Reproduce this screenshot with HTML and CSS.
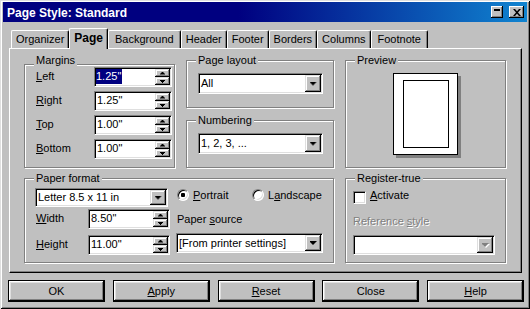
FILE: index.html
```html
<!DOCTYPE html>
<html lang="en">
<head>
<meta charset="utf-8">
<title>Page Style: Standard</title>
<link rel="stylesheet" href="styles.css">
</head>
<body>
<div class="window">
	<div class="titlebar">
		<span class="title">Page Style: Standard</span>
		<span class="tbtn tbtn-min"></span>
		<span class="tbtn tbtn-close"><svg width="8" height="7" viewBox="0 0 8 7"><path d="M0 0h2l2 2.3L6 0h2L5 3.5 8 7H6L4 4.7 2 7H0l3-3.5z"/></svg></span>
	</div>

	<div class="tabs">
		<div class="tab">Organizer</div>
		<div class="tab active">Page</div>
		<div class="tab wide">Background</div>
		<div class="tab">Header</div>
		<div class="tab">Footer</div>
		<div class="tab">Borders</div>
		<div class="tab">Columns</div>
		<div class="tab wide">Footnote</div>
	</div>

	<div class="panel">
		<div class="group margins">
			<span class="caption">Margins</span>
			<div class="row">
				<label><u>L</u>eft</label>
				<div class="spinbox"><span class="value"><span class="sel">1.25"</span></span><span class="spin"><i class="up"></i><i class="down"></i></span></div>
			</div>
			<div class="row">
				<label><u>R</u>ight</label>
				<div class="spinbox"><span class="value">1.25"</span><span class="spin"><i class="up"></i><i class="down"></i></span></div>
			</div>
			<div class="row">
				<label><u>T</u>op</label>
				<div class="spinbox"><span class="value">1.00"</span><span class="spin"><i class="up"></i><i class="down"></i></span></div>
			</div>
			<div class="row">
				<label><u>B</u>ottom</label>
				<div class="spinbox"><span class="value">1.00"</span><span class="spin"><i class="up"></i><i class="down"></i></span></div>
			</div>
		</div>

		<div class="stack">
			<div class="group single">
				<span class="caption">Page layout</span>
				<div class="combo"><span class="value">All</span><span class="drop"></span></div>
			</div>
			<div class="group single">
				<span class="caption">Numbering</span>
				<div class="combo"><span class="value">1, 2, 3, ...</span><span class="drop"></span></div>
			</div>
		</div>

		<div class="group preview">
			<span class="caption">Preview</span>
			<div class="page"><div class="page-body"></div></div>
		</div>

		<div class="group paper">
			<span class="caption">Paper format</span>
			<div class="paper-left">
				<div class="combo format"><span class="value">Letter 8.5 x 11 in</span><span class="drop"></span></div>
				<div class="row dim">
					<label><u>W</u>idth</label>
					<div class="spinbox"><span class="value">8.50"</span><span class="spin"><i class="up"></i><i class="down"></i></span></div>
				</div>
				<div class="row dim dim-last">
					<label><u>H</u>eight</label>
					<div class="spinbox"><span class="value">11.00"</span><span class="spin"><i class="up"></i><i class="down"></i></span></div>
				</div>
			</div>
			<div class="paper-right">
				<div class="options">
					<span class="option"><span class="radio on"></span><span><u>P</u>ortrait</span></span>
					<span class="option"><span class="radio"></span><span>L<u>a</u>ndscape</span></span>
				</div>
				<div class="label-line">Paper <u>s</u>ource</div>
				<div class="combo source"><span class="value">[From printer settings]</span><span class="drop"></span></div>
			</div>
		</div>

		<div class="group register">
			<span class="caption">Register-true</span>
			<div class="check-row"><span class="checkbox"></span><span class="check-label"><u>A</u>ctivate</span></div>
			<div class="label-line disabled">Reference <u>s</u>tyle</div>
			<div class="combo refstyle off"><span class="value"></span><span class="drop"></span></div>
		</div>
	</div>

	<div class="buttons">
		<div class="btn">OK</div>
		<div class="btn"><u>A</u>pply</div>
		<div class="btn"><u>R</u>eset</div>
		<div class="btn">Close</div>
		<div class="btn"><u>H</u>elp</div>
	</div>
</div>
</body>
</html>
```

FILE: styles.css
```css
body {
	margin: 0;
	background: #c0c0c0;
	color: #000;
	font-family: "Liberation Sans", Arial, sans-serif;
	font-size: 11px;
	line-height: 13px;
}

u {
	text-decoration-thickness: 1px;
	text-underline-offset: 1px;
}

.window {
	width: 530px;
	height: 309px;
	box-sizing: border-box;
	padding: 2px 3px 3px 3px;
	background: #c0c0c0;
	box-shadow: inset 1px 1px #dfdfdf, inset -1px -1px #000, inset 2px 2px #fff, inset -2px -2px #808080;
}

/* title bar */

.titlebar {
	display: flex;
	align-items: center;
	height: 20px;
	padding: 0 3px 0 4px;
	background: linear-gradient(90deg, #000080 45%, #1084d0);
	color: #fff;
}

.title {
	flex: 1;
	padding-top: 3px;
	font-size: 12px;
	font-weight: bold;
}

.tbtn {
	display: flex;
	align-items: center;
	justify-content: center;
	width: 12px;
	height: 12px;
	background: #c0c0c0;
	box-shadow: inset -1px -1px #000, inset 1px 1px #fff, inset -2px -2px #808080;
}

.tbtn-min {
	align-items: flex-start;
	justify-content: flex-start;
}

.tbtn-min::after {
	content: "";
	width: 6px;
	height: 2px;
	margin: 3px 0 0 3px;
	background: #000;
}

.tbtn-close {
	width: 15px;
	margin-left: 6px;
}

/* tabs */

.tabs {
	display: flex;
	align-items: flex-end;
	height: 20px;
	margin-top: 6px;
	padding-left: 8px;
}

.tab {
	height: 18px;
	box-sizing: border-box;
	padding: 2px 4px 0;
	border: 1px solid #fff;
	border-right-color: #000;
	border-bottom: 0;
	border-radius: 2px 2px 0 0;
	box-shadow: inset -1px 0 #808080;
}

.tab.wide {
	padding: 2px 6px 0;
}

.tab.active {
	position: relative;
	z-index: 1;
	height: 21px;
	margin-bottom: -1px;
	padding-top: 3px;
	background: #c0c0c0;
	font-size: 12px;
	font-weight: bold;
}

/* page panel */

.panel {
	display: grid;
	grid-template-columns: 151px 148px 161px;
	grid-template-rows: 108px 85px;
	column-gap: 11px;
	row-gap: 10px;
	height: 225px;
	box-sizing: border-box;
	margin: 0 5px 0 6px;
	padding: 11px 0 0 14px;
	border: 1px solid;
	border-color: #fff #000 #000 #fff;
	box-shadow: inset -1px -1px #808080;
}

.group {
	position: relative;
	border: 1px solid #808080;
	box-shadow: inset 1px 1px #fff, 1px 1px #fff;
}

.caption {
	position: absolute;
	top: -7px;
	left: 9px;
	padding: 0 2px;
	background: #c0c0c0;
}

.row {
	display: flex;
	align-items: center;
}

.row label {
	padding-bottom: 2px;
}

.margins {
	display: flex;
	flex-direction: column;
	gap: 4px;
	margin-top: 4px;
	padding: 2px 2px 0 11px;
}

.margins .caption {
	top: -11px;
}

.margins label {
	width: 58px;
}

/* sunken fields */

.spinbox, .combo {
	display: flex;
	box-sizing: border-box;
	padding: 1px;
	background: #fff;
	border: 1px solid;
	border-color: #808080 #fff #fff #808080;
	box-shadow: inset 1px 1px #000, inset -1px -1px #dfdfdf;
}

.spinbox {
	width: 78px;
	height: 20px;
}

.spinbox .value {
	flex: 1;
	padding-left: 1px;
	line-height: 14px;
}

.sel {
	display: inline-block;
	padding: 0 1px 1px 0;
	margin-left: -1px;
	background: #000080;
	color: #fff;
}

.spin {
	display: flex;
	flex-direction: column;
	width: 15px;
}

.spin i, .drop {
	display: grid;
	place-items: center;
	background: #c0c0c0;
	box-shadow: inset -1px -1px #000, inset 1px 1px #dfdfdf, inset -2px -2px #808080, inset 2px 2px #fff;
}

.spin i {
	flex: 1;
}

.spin i::after {
	content: "";
	width: 5px;
	height: 3px;
	background: #000;
	clip-path: polygon(2px 0, 3px 0, 3px 1px, 4px 1px, 4px 2px, 5px 2px, 5px 3px, 0 3px, 0 2px, 1px 2px, 1px 1px, 2px 1px);
}

.spin i.down::after {
	transform: scaleY(-1);
}

.combo {
	height: 21px;
}

.combo .value {
	flex: 1;
	align-self: center;
	padding-left: 1px;
	white-space: nowrap;
}

.drop {
	width: 16px;
}

.drop::before, .drop::after {
	content: "";
	grid-area: 1 / 1;
	width: 7px;
	height: 4px;
	clip-path: polygon(0 0, 7px 0, 7px 1px, 6px 1px, 6px 2px, 5px 2px, 5px 3px, 4px 3px, 4px 4px, 3px 4px, 3px 3px, 2px 3px, 2px 2px, 1px 2px, 1px 1px, 0 1px);
}

.drop::after {
	background: #000;
}

.off .drop::before {
	background: #fff;
	transform: translate(1px, 1px);
}

.off .drop::after {
	background: #808080;
}

/* middle column */

.stack {
	display: flex;
	flex-direction: column;
	gap: 12px;
}

.single {
	flex: 1;
	padding: 12px 0 0 11px;
}

.single .combo {
	width: 125px;
}

/* preview */

.preview {
	display: flex;
	align-items: center;
	justify-content: center;
}

.page {
	width: 65px;
	height: 82px;
	box-sizing: border-box;
	padding: 6px 8px 6px 9px;
	background: #fff;
	border: 1px solid #000;
	box-shadow: 3px 3px 0 #808080;
}

.page-body {
	height: 100%;
	box-sizing: border-box;
	border: 1px solid #000;
}

/* paper format */

.paper {
	grid-column: 1 / 3;
	display: flex;
	padding: 9px 0 0 10px;
}

.paper-left {
	display: flex;
	flex-direction: column;
	width: 135px;
}

.combo.format {
	width: 133px;
	height: 19px;
}

.dim {
	margin-top: 2px;
}

.dim-last {
	margin-top: 6px;
}

.dim label {
	width: 52px;
	padding-left: 1px;
}

.dim .spinbox {
	width: 82px;
}

.paper-right {
	display: flex;
	flex-direction: column;
	width: 147px;
	margin-left: 6px;
}

.options {
	display: flex;
	align-items: center;
	height: 14px;
	padding-left: 1px;
}

.option {
	display: flex;
	align-items: center;
	gap: 4px;
}

.option:first-child {
	width: 75px;
}

.radio {
	display: grid;
	place-items: center;
	width: 12px;
	height: 12px;
	box-sizing: border-box;
	background: #fff;
	border: 1px solid;
	border-color: #808080 #fff #fff #808080;
	border-radius: 50%;
	box-shadow: inset 1px 1px #000, inset -1px -1px #dfdfdf;
}

.radio.on::after {
	content: "";
	width: 4px;
	height: 4px;
	border-radius: 1px;
	background: #000;
}

.label-line {
	margin-top: 11px;
	padding-left: 1px;
}

.combo.source {
	width: 147px;
	height: 20px;
	margin-top: 7px;
}

/* register-true */

.register {
	display: flex;
	flex-direction: column;
	padding: 12px 0 0 7px;
}

.check-row {
	display: flex;
	align-items: flex-start;
	gap: 4px;
}

.checkbox {
	width: 13px;
	height: 13px;
	box-sizing: border-box;
	background: #fff;
	border: 1px solid;
	border-color: #808080 #fff #fff #808080;
	box-shadow: inset 1px 1px #000, inset -1px -1px #dfdfdf;
}

.check-label {
	margin-top: -2px;
}

.register .label-line {
	padding-left: 0;
}

.disabled {
	color: #808080;
	text-shadow: 1px 1px 0 #fff;
}

.combo.refstyle {
	width: 142px;
	height: 20px;
	margin-top: 7px;
}

/* dialog buttons */

.buttons {
	display: flex;
	justify-content: space-between;
	margin: 7px 3px 0 5px;
}

.btn {
	display: flex;
	align-items: center;
	justify-content: center;
	width: 97px;
	height: 22px;
	box-sizing: border-box;
	border: 1px solid #000;
	box-shadow: inset -1px -1px #000, inset 1px 1px #fff, inset -2px -2px #808080, inset 2px 2px #dfdfdf;
}
```
